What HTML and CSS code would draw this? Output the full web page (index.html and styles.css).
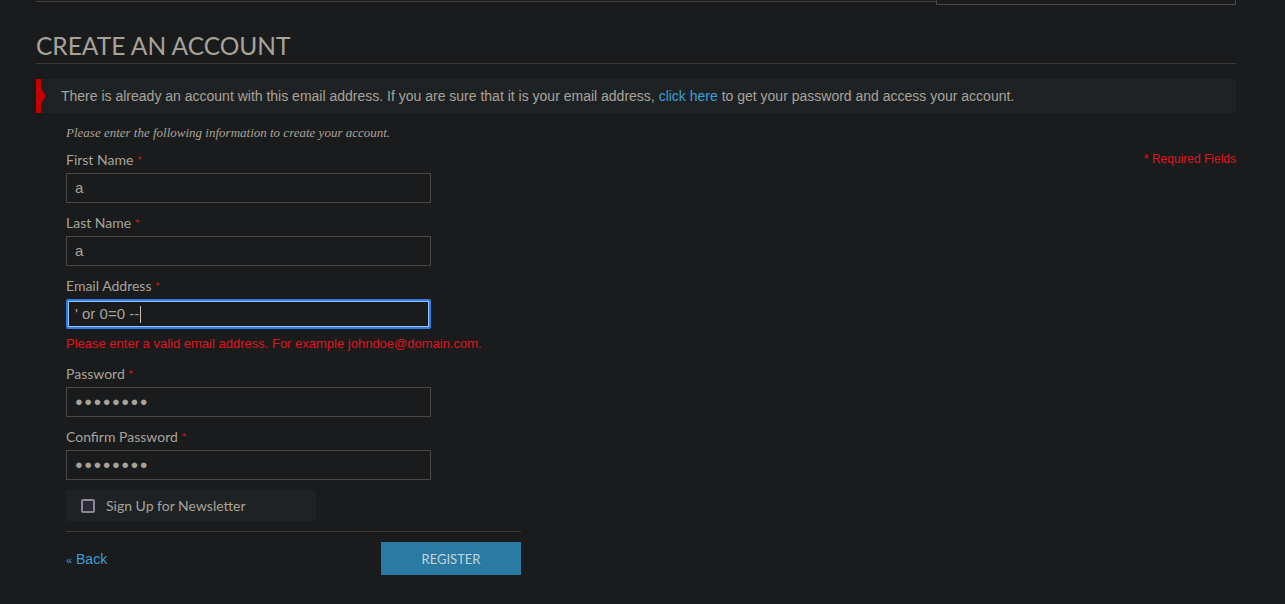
FILE: index.html
```html
<!DOCTYPE html>
<html>
<head>
<meta charset="utf-8">
<link rel="stylesheet" href="styles.css">
</head>
<body>
<div class="page">
  <div class="topbar">
    <div class="topline"></div>
    <div class="topbox"></div>
  </div>
  <h1 class="title">CREATE AN ACCOUNT</h1>
  <div class="notice">
    <span class="notice-flag"></span>
    <p>There is already an account with this email address. If you are sure that it is your email address, <a href="#">click here</a> to get your password and access your account.</p>
  </div>
  <div class="formwrap">
    <div class="formcol">
      <p class="intro">Please enter the following information to create your account.</p>
      <div class="field">
        <label>First Name <em>*</em></label>
        <div class="input">a</div>
      </div>
      <div class="field">
        <label>Last Name <em>*</em></label>
        <div class="input">a</div>
      </div>
      <div class="field">
        <label>Email Address <em>*</em></label>
        <div class="input focus">' or 0=0 --<span class="caret"></span></div>
        <p class="error">Please enter a valid email address. For example johndoe@domain.com.</p>
      </div>
      <div class="field">
        <label>Password <em>*</em></label>
        <div class="input dots">●●●●●●●●</div>
      </div>
      <div class="field">
        <label>Confirm Password <em>*</em></label>
        <div class="input dots">●●●●●●●●</div>
      </div>
      <div class="newsletter">
        <span class="checkbox"></span>
        <span>Sign Up for Newsletter</span>
      </div>
      <div class="actions">
        <a href="#" class="back"><small>«</small> Back</a>
        <button class="register">REGISTER</button>
      </div>
    </div>
    <p class="required">* Required Fields</p>
  </div>
</div>
</body>
</html>
```
FILE: styles.css
```css
* { box-sizing: border-box; }
html, body { margin: 0; padding: 0; background: #1a1b1d; }
body { font-family: "Liberation Sans", Arial, sans-serif; color: #a8a39a; }
.page { width: 1200px; margin-left: 36px; }
.topbar { display: flex; align-items: flex-start; height: 5px; }
.topline { width: 900px; height: 2px; border-bottom: 1px solid #3e3e3e; }
.topbox { flex: 1; height: 5px; border: 1px solid #4a4a4a; border-top: none; }
.title {
  margin: 25px 0 0; padding-bottom: 2px;
  font-family: Lato, "Open Sans", sans-serif; font-weight: 400; font-size: 24.5px; line-height: 31px;
  color: #a8a39a; border-bottom: 1px solid #3a3a3a; letter-spacing: 0;
}
.notice {
  position: relative; margin-top: 15px; height: 34px; background: #1f2224;
  border-left: 5px solid #c40000; display: flex; align-items: center; padding-left: 20px;
}
.notice-flag {
  position: absolute; left: 0; top: 9px; width: 0; height: 0;
  border-top: 8px solid transparent; border-bottom: 8px solid transparent; border-left: 5px solid #c40000;
}
.notice p { margin: 0; font-size: 14px; color: #a8a39a; }
.notice a { color: #3a9fd5; text-decoration: none; }
.formwrap { display: flex; justify-content: space-between; padding-left: 30px; }
.formcol { width: 455px; }
.intro { margin: 12px 0 10px; font-family: "Liberation Serif", serif; font-style: italic; font-size: 13px; line-height: 16px; color: #a8a39a; }
.required { margin: 39px 0 0; font-size: 12px; line-height: 14px; color: #e0141e; }
.field { margin-bottom: 11px; }
.field label { display: block; font-family: Lato, "Open Sans", sans-serif; font-size: 14px; line-height: 18px; margin-bottom: 3px; color: #a8a39a; }
.field label em { font-style: normal; color: #d81818; font-size: 12px; }
.input {
  width: 365px; height: 30px; border: 1px solid #484848; background: #1a1b1d;
  padding: 0 8px; font-size: 15px; line-height: 28px; color: #a8a39a; display: flex; align-items: center;
}
.input.focus { border: 2px solid #2f7de6; border-radius: 2px; padding-left: 7px; box-shadow: 0 0 0 1px #9cc3f0 inset; }
.caret { display: inline-block; width: 1px; height: 17px; background: #c8c4bc; margin-left: 1px; }
.input.dots { font-size: 13px; letter-spacing: 1.4px; color: #a8a39a; }
.error { margin: 7px 0 13px; font-size: 13px; line-height: 16px; color: #e0141e; }
.field:has(.error) { margin-bottom: 0; }
.newsletter {
  margin-top: -1px; width: 250px; height: 31px; background: #1f2224;
  display: flex; align-items: center; padding-left: 15px; gap: 11px;
  font-family: Lato, "Open Sans", sans-serif; font-size: 14px; color: #a8a39a;
}
.checkbox { width: 14px; height: 14px; border: 2px solid #8a8696; border-radius: 2px; background: #2a2a33; }
.actions {
  margin-top: 10px; border-top: 1px solid #3a3a3a; padding-top: 10px;
  display: flex; justify-content: space-between; align-items: center;
}
.back { color: #3a9fd5; text-decoration: none; font-size: 14px; }
.back small { font-size: 11px; }
.register {
  width: 140px; height: 33px; border: none; background: #2a7aa3; color: #c8d4da;
  font-family: Lato, "Open Sans", sans-serif; font-size: 13px; cursor: pointer;
}
```
